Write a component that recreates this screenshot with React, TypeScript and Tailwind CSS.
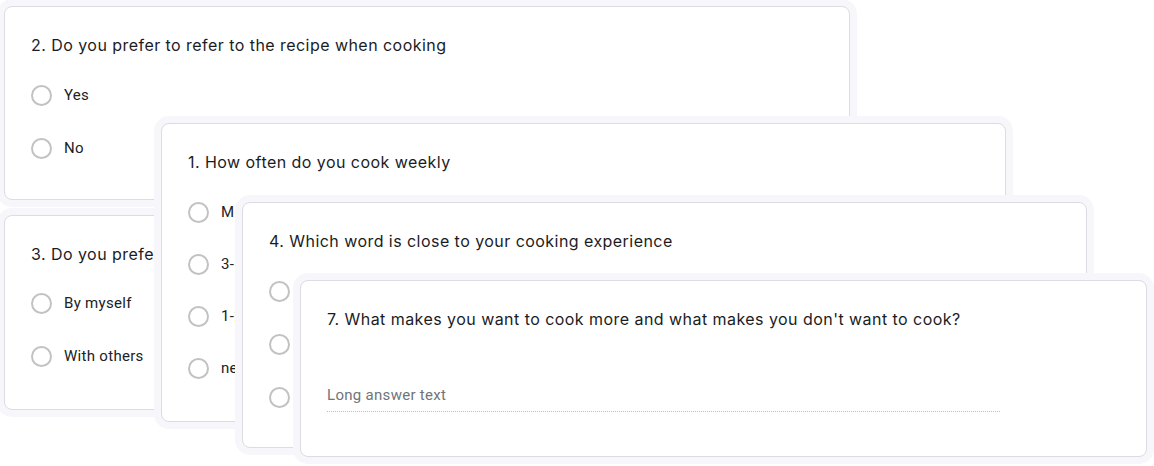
import React from 'react';

const titleFont = { fontFamily: 'Inter, "Noto Sans", sans-serif' };

const Radio = ({ label }: { label: string }) => (
  <div className="flex h-6 items-center gap-3">
    <span className="h-[21px] w-[21px] shrink-0 rounded-full border-2 border-[#c2c2c2] bg-white" />
    <span className="font-['Roboto',sans-serif] text-[15px] tracking-[0.3px] text-[#202124]">{label}</span>
  </div>
);

const Card = ({ className, children }: { className: string; children: React.ReactNode }) => (
  <div
    className={
      'absolute rounded-lg border border-[#dcdce2] bg-white pl-[26px] pt-[26px] shadow-[0_0_0_7px_#f7f6fb] ' +
      className
    }
  >
    {children}
  </div>
);

const Title = ({ children }: { children: React.ReactNode }) => (
  <h3 style={titleFont} className="h-6 whitespace-nowrap text-base leading-6 tracking-[0.45px] text-[#1b1c1f]">
    {children}
  </h3>
);

export default function App() {
  return (
    <div className="relative h-[466px] w-[1154px] overflow-hidden bg-white">
      {/* 2 */}
      <Card className="left-[4px] top-[6px] h-[194px] w-[846px]">
        <Title>2. Do you prefer to refer to the recipe when cooking</Title>
        <div className="mt-[26px] flex flex-col gap-[29px]">
          <Radio label="Yes" />
          <Radio label="No" />
        </div>
      </Card>

      {/* 3 */}
      <Card className="left-[4px] top-[215px] h-[195px] w-[846px]">
        <Title>3. Do you prefer to cook by yourself or with others</Title>
        <div className="mt-[25px] flex flex-col gap-[29px]">
          <Radio label="By myself" />
          <Radio label="With others" />
        </div>
      </Card>

      {/* 1 */}
      <Card className="left-[161px] top-[123px] h-[299px] w-[845px]">
        <Title>1. How often do you cook weekly</Title>
        <div className="mt-[26px] flex flex-col gap-[28px]">
          <Radio label="More than 5 times" />
          <Radio label="3-5 times" />
          <Radio label="1-2 times" />
          <Radio label="never" />
        </div>
      </Card>

      {/* 4 */}
      <Card className="left-[242px] top-[202px] h-[246px] w-[845px]">
        <Title>4. Which word is close to your cooking experience</Title>
        <div className="mt-[26px] flex flex-col gap-[29px]">
          <Radio label="Fun" />
          <Radio label="Chore" />
          <Radio label="Challenge" />
        </div>
      </Card>

      {/* 7 */}
      <Card className="left-[300px] top-[280px] h-[177px] w-[847px]">
        <Title>7. What makes you want to cook more and what makes you don't want to cook?</Title>
        <div className="mt-[53px] w-[673px] border-b border-dotted border-[#bdbdbd] pb-[5px]">
          <span className="block h-[22px] font-['Roboto',sans-serif] text-[15px] tracking-[0.3px] leading-[22px] text-[#70757a]">
            Long answer text
          </span>
        </div>
      </Card>
    </div>
  );
}
